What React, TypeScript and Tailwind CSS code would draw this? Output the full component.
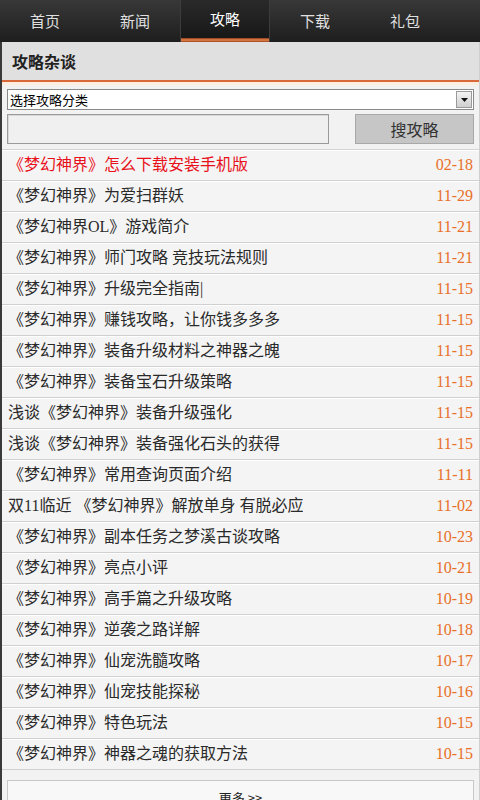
import React from "react";

type Item = { title: string; date: string; hot?: boolean };

const tabs = ["首页", "新闻", "攻略", "下载", "礼包"];

const items: Item[] = [
  { title: "《梦幻神界》怎么下载安装手机版", date: "02-18", hot: true },
  { title: "《梦幻神界》为爱扫群妖", date: "11-29" },
  { title: "《梦幻神界OL》游戏简介", date: "11-21" },
  { title: "《梦幻神界》师门攻略 竞技玩法规则", date: "11-21" },
  { title: "《梦幻神界》升级完全指南|", date: "11-15" },
  { title: "《梦幻神界》赚钱攻略，让你钱多多多", date: "11-15" },
  { title: "《梦幻神界》装备升级材料之神器之魄", date: "11-15" },
  { title: "《梦幻神界》装备宝石升级策略", date: "11-15" },
  { title: "浅谈《梦幻神界》装备升级强化", date: "11-15" },
  { title: "浅谈《梦幻神界》装备强化石头的获得", date: "11-15" },
  { title: "《梦幻神界》常用查询页面介绍", date: "11-11" },
  { title: "双11临近 《梦幻神界》解放单身 有脱必应", date: "11-02" },
  { title: "《梦幻神界》副本任务之梦溪古谈攻略", date: "10-23" },
  { title: "《梦幻神界》亮点小评", date: "10-21" },
  { title: "《梦幻神界》高手篇之升级攻略", date: "10-19" },
  { title: "《梦幻神界》逆袭之路详解", date: "10-18" },
  { title: "《梦幻神界》仙宠洗髓攻略", date: "10-17" },
  { title: "《梦幻神界》仙宠技能探秘", date: "10-16" },
  { title: "《梦幻神界》特色玩法", date: "10-15" },
  { title: "《梦幻神界》神器之魂的获取方法", date: "10-15" },
];

const cjk = "font-['Noto_Sans_CJK_SC',sans-serif]";
const serif = "font-['Liberation_Serif','Noto_Sans_CJK_SC',serif]";

export default function App() {
  return (
    <div className={`min-h-[800px] w-[480px] overflow-hidden bg-[#f2f2f2] ${cjk}`}>
      {/* Nav */}
      <div className="flex h-[42px] bg-gradient-to-b from-[#383838] to-[#1e1e1e] pr-[30px]">
        {tabs.map((t, i) => {
          const active = i === 2;
          return (
            <div
              key={t}
              className={
                active
                  ? "flex w-[90px] flex-col border-x border-[#3c3c3c] bg-gradient-to-b from-[#2a2a2a] to-[#161616]"
                  : "flex w-[90px] flex-col"
              }
            >
              <div
                className={`flex flex-1 items-center justify-center text-[15px] ${
                  active ? "text-white" : "text-[#e0e0e0]"
                }`}
              >
                {t}
              </div>
              {active && (
                <div className="h-[4px] bg-gradient-to-b from-[#8a3a1c] via-[#e8864a] to-[#9a4420]" />
              )}
            </div>
          );
        })}
      </div>

      <div className="border-l-2 border-r border-l-[#3a3a3a] border-r-[#cfcfcf]">
        {/* Section header */}
        <div className="flex h-[40px] items-center border-b-2 border-[#d9693a] bg-[#e0e0e0] px-[10px]">
          <span className="text-[16px] font-bold text-[#222]">攻略杂谈</span>
        </div>
        <div className="h-[3px] bg-[#fbeede]" />

        {/* Search */}
        <div className="flex flex-col gap-[4px] px-[5px] pt-[4px]">
          <div className="flex h-[21px] items-center justify-between border border-[#8a8a8a] bg-white pl-[2px]">
            <span className="text-[13px] text-black">选择攻略分类</span>
            <div className="mr-[1px] flex h-[17px] w-[16px] items-center justify-center border border-[#9a9a9a] bg-gradient-to-b from-[#f4f4f4] to-[#cfcfcf]">
              <svg width="7" height="4" viewBox="0 0 7 4">
                <path d="M0 0h7L3.5 4z" fill="#111" />
              </svg>
            </div>
          </div>
          <div className="flex items-stretch justify-between">
            <div className="h-[30px] w-[322px] border border-[#9a9a9a] bg-[#f0f0f0] shadow-[inset_1px_1px_0_#d8d8d8]" />
            <button className="flex h-[30px] w-[119px] items-center justify-center border border-[#a8a8a8] bg-[#c6c6c6] text-[16px] text-[#333]">
              搜攻略
            </button>
          </div>
        </div>

        {/* List */}
        <div className="mt-[5px] flex flex-col border-t border-[#d4d4d4]">
          {items.map((it) => (
            <div
              key={it.title + it.date}
              className="flex h-[31px] items-center justify-between border-b border-[#d0d0d0] bg-[#f4f4f4] px-[6px] shadow-[inset_0_1px_0_#ffffff]"
            >
              <span
                className={`truncate text-[16px] ${serif} ${
                  it.hot ? "text-[#e8101a]" : "text-[#2a2a2a]"
                }`}
              >
                {it.title}
              </span>
              <span className={`text-[16px] text-[#e87028] ${serif}`}>{it.date}</span>
            </div>
          ))}
        </div>

        {/* More */}
        <div className="px-[5px] pt-[10px]">
          <div className="flex h-[36px] items-center justify-center border border-[#c8c8c8] bg-[#f8f8f8] text-[13px] text-[#222]">
            更多 &gt;&gt;
          </div>
        </div>
      </div>
    </div>
  );
}
